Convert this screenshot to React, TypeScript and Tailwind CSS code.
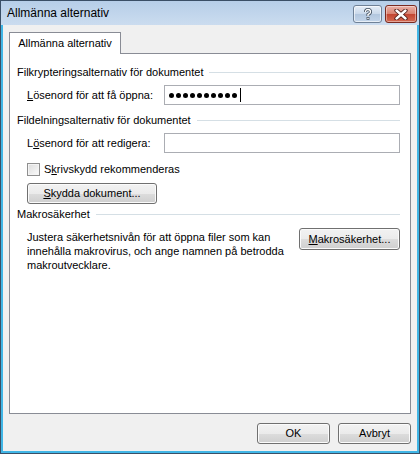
import React from 'react';

const font = "font-['Liberation_Sans',Arial,sans-serif]";

const btn =
  'flex items-center justify-center whitespace-nowrap rounded-[3px] border border-[#707070] bg-[linear-gradient(to_bottom,#f2f2f2_0%,#ebebeb_50%,#dddddd_50%,#cfcfcf_100%)] shadow-[inset_0_0_0_1px_#fbfbfb] text-[11px] text-black';

function Section({ title }: { title: string }) {
  return (
    <div className="flex h-[15px] items-center pl-[7px] pr-[10px]">
      <span className="whitespace-nowrap leading-[15px]">{title}</span>
      <div className="ml-[6px] h-px flex-1 bg-[#d5dfe5]" />
    </div>
  );
}

function TitleButtons() {
  return (
    <div className="flex items-start gap-[3px] pt-[4px]">
      <div className="flex h-[18px] w-[29px] items-center justify-center rounded-[3px] border border-[#6f8197] bg-[linear-gradient(to_bottom,#e6eef8_0%,#c9d8ea_50%,#b2c6de_50%,#c3d5ea_100%)] shadow-[inset_0_0_0_1px_rgba(255,255,255,0.6)]">
        <svg width="10" height="12" viewBox="0 0 10 12">
          <path d="M2.5 4 Q2.5 1.5 5 1.5 Q7.5 1.5 7.5 4 Q7.5 5.5 5 6.5 L5 8" fill="none" stroke="#3d4a5a" strokeWidth="3" />
          <path d="M2.5 4 Q2.5 1.5 5 1.5 Q7.5 1.5 7.5 4 Q7.5 5.5 5 6.5 L5 8" fill="none" stroke="#ffffff" strokeWidth="1.4" />
          <rect x="3.6" y="9" width="2.8" height="2.8" fill="#3d4a5a" />
          <rect x="4.3" y="9.7" width="1.4" height="1.4" fill="#ffffff" />
        </svg>
      </div>
      <div className="flex h-[18px] w-[32px] items-center justify-center rounded-[3px] border border-[#7a2a20] bg-[linear-gradient(to_bottom,#e9b0a6_0%,#d9816f_50%,#c24430_50%,#d46a52_100%)] shadow-[inset_0_0_0_1px_rgba(255,255,255,0.4)]">
        <svg width="14" height="11" viewBox="0 0 14 11">
          <path d="M2.5 1.5 L11.5 9.5 M11.5 1.5 L2.5 9.5" stroke="#4a1a14" strokeWidth="4.2" strokeLinecap="round" />
          <path d="M2.5 1.5 L11.5 9.5 M11.5 1.5 L2.5 9.5" stroke="#ffffff" strokeWidth="2.4" strokeLinecap="round" />
        </svg>
      </div>
    </div>
  );
}

function PasswordDots() {
  return (
    <div className="flex items-center gap-[2px] pl-[4px]">
      {Array.from({ length: 10 }).map((_, i) => (
        <span key={i} className="h-[5px] w-[5px] rounded-full bg-black" />
      ))}
      <span className="ml-[1px] h-[14px] w-px bg-black" />
    </div>
  );
}

export default function App() {
  return (
    <div className={`flex h-[454px] w-[420px] flex-col border border-[#3a4f66] bg-[#41b6e6] ${font} text-[11px] text-black`}>
      {/* title bar */}
      <div className="flex h-[24px] items-start justify-between bg-[linear-gradient(to_bottom,#b6cee8,#cbdcef)] pl-[6px] pr-[2px]">
        <span className="whitespace-nowrap pt-[5px] text-[12px] leading-[15px]">Allmänna alternativ</span>
        <TitleButtons />
      </div>

      {/* client */}
      <div className="mx-[2px] mb-[2px] flex flex-1 flex-col bg-[#f0f0f0] pl-[6px] pr-[6px] pt-[7px]">
        <div className="flex">
          <div className="relative z-10 -mb-px flex h-[22px] w-[112px] items-center justify-center whitespace-nowrap border border-b-0 border-[#898c95] bg-white">
            Allmänna alternativ
          </div>
        </div>

        <div className="flex h-[361px] flex-col border border-[#898c95] bg-white">
          <div className="mt-[11px]">
            <Section title="Filkrypteringsalternativ för dokumentet" />
          </div>
          <div className="mt-[5px] flex items-center pl-[17px] pr-[10px]">
            <span className="w-[137px] whitespace-nowrap">
              <u>L</u>ösenord för att få öppna:
            </span>
            <div className="flex h-[20px] flex-1 items-center border border-[#abadb3] bg-white">
              <PasswordDots />
            </div>
          </div>

          <div className="mt-[8px]">
            <Section title="Fildelningsalternativ för dokumentet" />
          </div>
          <div className="mt-[5px] flex items-center pl-[17px] pr-[10px]">
            <span className="w-[137px] whitespace-nowrap">
              L<u>ö</u>senord för att redigera:
            </span>
            <div className="h-[20px] flex-1 border border-[#abadb3] bg-white" />
          </div>

          <div className="mt-[9px] flex items-center pl-[17px]">
            <span className="h-[13px] w-[13px] border border-[#8f8f8f] bg-[linear-gradient(135deg,#dcdcdc,#fbfbfb)] shadow-[inset_0_0_0_1px_#f4f4f4]" />
            <span className="ml-[4px] whitespace-nowrap leading-[15px]">
              S<u>k</u>rivskydd rekommenderas
            </span>
          </div>

          <div className="mt-[6px] flex pl-[17px]">
            <button className={`${btn} h-[21px] w-[130px]`}>
              <u>S</u>kydda dokument...
            </button>
          </div>

          <div className="mt-[3px]">
            <Section title="Makrosäkerhet" />
          </div>
          <div className="mt-[8px] flex items-start pl-[17px] pr-[10px]">
            <p className="flex-1 whitespace-nowrap leading-[14px]">
              Justera säkerhetsnivån för att öppna filer som kan
              <br />
              innehålla makrovirus, och ange namnen på betrodda
              <br />
              makroutvecklare.
            </p>
            <button className={`${btn} -mt-[2px] h-[22px] w-[101px]`}>
              <u>M</u>akrosäkerhet...
            </button>
          </div>
        </div>

        <div className="mt-[9px] flex justify-end gap-[8px]">
          <button className={`${btn} h-[21px] w-[73px] border-[#3c7fb1] shadow-[inset_0_0_0_1px_#bfe2f6]`}>OK</button>
          <button className={`${btn} h-[21px] w-[73px]`}>Avbryt</button>
        </div>
      </div>
    </div>
  );
}
